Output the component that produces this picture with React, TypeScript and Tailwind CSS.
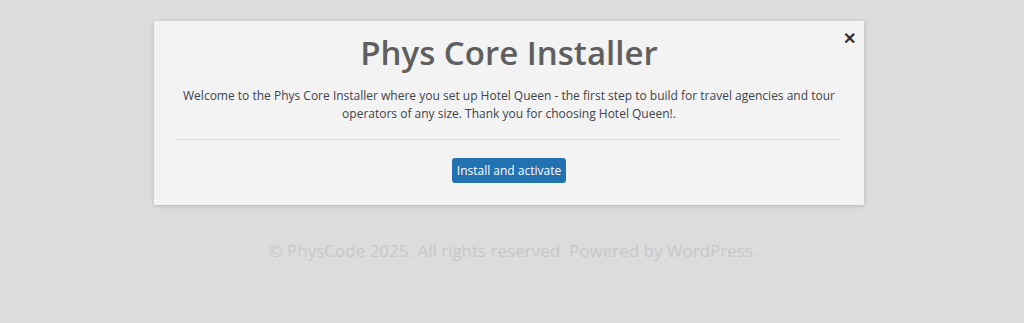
import React from "react";

const App = () => {
  return (
    <div
      className="min-h-[323px] w-full bg-[#dcdcdc] pt-[21px]"
      style={{ fontFamily: '"Open Sans", "Noto Sans", sans-serif' }}
    >
      {/* Installer card */}
      <div className="relative ml-[154px] w-[710px] bg-[#f3f3f3] px-[22px] pt-[11px] pb-[22px] shadow-[0_1px_4px_rgba(0,0,0,0.18)]">
        <button className="absolute right-[8px] top-[9px] text-[16px] font-bold leading-none text-[#333]">
          ✕
        </button>
        <h1 className="text-center text-[33px] font-semibold leading-[42px] text-[#5f5f5f]">
          Phys Core Installer
        </h1>
        <p className="mx-auto mt-[13px] max-w-[660px] text-center text-[12px] leading-[18px] text-[#3c434a]">
          Welcome to the Phys Core Installer where you set up Hotel Queen - the first step to build for travel
          agencies and tour operators of any size. Thank you for choosing Hotel Queen!.
        </p>
        <hr className="mt-[16px] border-t border-[#dedede]" />
        <div className="mt-[18px] flex justify-center">
          <button className="h-[25px] w-[114px] rounded-[3px] bg-[#2271b1] text-[12px] leading-[25px] text-white">
            Install and activate
          </button>
        </div>
      </div>

      <p className="mt-[33px] pl-[2px] text-center text-[17px] text-[#c8c8c8]">
        © PhysCode 2025. All rights reserved. Powered by WordPress.
      </p>
    </div>
  );
};

export default App;
